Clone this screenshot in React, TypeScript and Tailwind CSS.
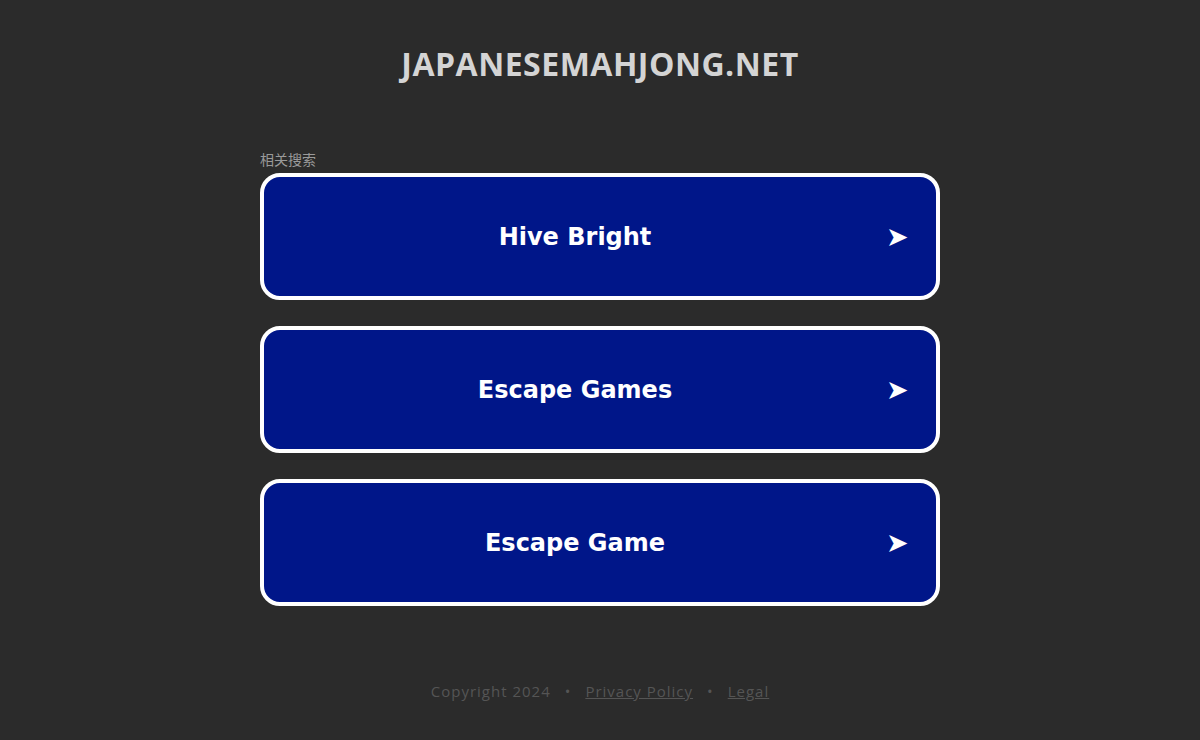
import React from 'react';

const links = ['Hive Bright', 'Escape Games', 'Escape Game'];

const App: React.FC = () => {
  return (
    <div className="min-h-[740px] w-full bg-[#2b2b2b] flex flex-col items-center font-['Open_Sans',sans-serif]">
      <h1 className="mt-[44px] text-[32px] leading-[40px] font-bold text-[#d4d4d4] tracking-[0.5px]">
        JAPANESEMAHJONG.NET
      </h1>

      <div className="mt-[66px] w-[680px] flex flex-col">
        <div className="text-[14px] leading-[18px] text-[#9a9a9a] font-['Noto_Sans_CJK_SC',sans-serif] mb-[5px]">
          相关搜索
        </div>
        <div className="flex flex-col gap-[26px]">
          {links.map((label) => (
            <a
              key={label}
              href="#"
              className="h-[127px] flex items-center rounded-[20px] border-4 border-white bg-[#001689] text-white"
            >
              <span className="flex-1 text-center font-['DejaVu_Sans',sans-serif] font-bold text-[24px]">
                {label}
              </span>
              <span className="w-[20px] mr-[30px] text-[27px] leading-none font-['DejaVu_Sans',sans-serif]">➤</span>
            </a>
          ))}
        </div>
      </div>

      <footer className="mt-[74px] text-[15px] tracking-[1px] text-[#555] font-['Open_Sans',sans-serif]">
        <span>Copyright 2024</span>
        <span className="mx-[14px]">•</span>
        <a href="#" className="underline">Privacy Policy</a>
        <span className="mx-[14px]">•</span>
        <a href="#" className="underline">Legal</a>
      </footer>
    </div>
  );
};

export default App;
